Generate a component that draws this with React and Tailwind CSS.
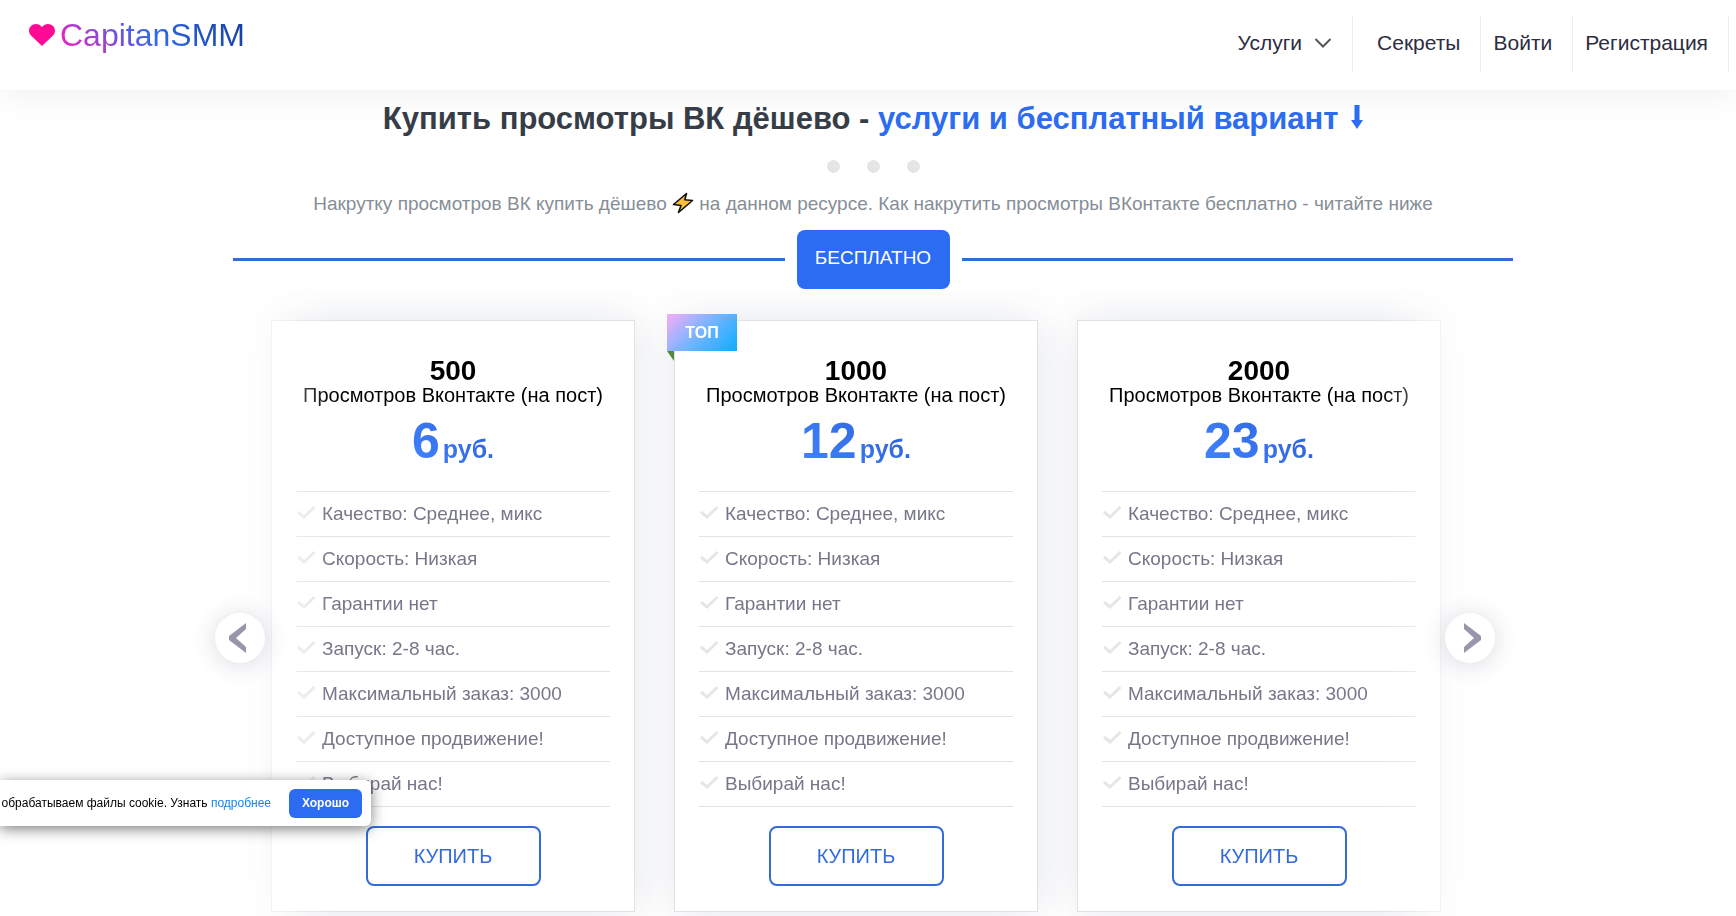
import clsx from 'clsx'

const navLinks = [
  { label: 'Секреты', href: '#secrets', className: 'pl-6' },
  { label: 'Войти', href: '#login', className: 'pl-3' },
  { label: 'Регистрация', href: '#signup', className: 'pl-3' },
]

const features = [
  'Качество: Среднее, микс',
  'Скорость: Низкая',
  'Гарантии нет',
  'Запуск: 2-8 час.',
  'Максимальный заказ: 3000',
  'Доступное продвижение!',
  'Выбирай нас!',
]

const plans = [
  { amount: '500', price: '6' },
  { amount: '1000', price: '12', top: true },
  { amount: '2000', price: '23' },
]

function Header() {
  return (
    <header className="relative z-10 flex h-[90px] items-start justify-between bg-white pt-4 pr-[7px] pl-7 shadow-[0_0_40px_rgba(0,0,0,0.08)]">
      <a href="#home" className="flex items-center gap-1 text-[32px] leading-[38px]">
        <svg viewBox="0 0 26 22" className="h-[22px] w-7" fill="#ff0a95" aria-hidden="true">
          <path d="M13 22 2 11.600C-.6 9 -.6 4.700 1.800 2.200 4.600-.7 9.500-.7 12.200 2.200L13 3l.8-.8C16.500-.7 21.400-.7 24.200 2.200 26.600 4.700 26.600 9 24 11.600Z" />
        </svg>
        <span className="bg-linear-[45deg,#ff1cc0_0%,#2f6be8_50%,#123a96_100%] bg-clip-text text-transparent">
          CapitanSMM
        </span>
      </a>

      <nav className="flex h-14 text-[21px] text-[#2d2d3f]">
        <button type="button" className="flex items-center gap-3 border-r border-[#ededf0] pr-5 pb-0.5">
          Услуги
          <svg viewBox="0 0 18 12" className="h-3 w-[18px]" fill="none" stroke="#55555c" strokeWidth="2" aria-hidden="true">
            <path d="M1.500 2 9 9.500 16.500 2" />
          </svg>
        </button>
        {navLinks.map((link) => (
          <a
            key={link.href}
            href={link.href}
            className={clsx('flex items-center border-r border-[#ededf0] pr-5 pb-0.5', link.className)}
          >
            {link.label}
          </a>
        ))}
      </nav>
    </header>
  )
}

function PlanCard({ plan }) {
  return (
    <article className="relative border border-[#dfe1e6] bg-white px-6 pt-9 pb-[25px] text-center shadow-[0_0_40px_rgba(50,60,100,0.13)]">
      {plan.top ? (
        <div className="absolute -top-[7px] -left-2">
          <span className="flex h-[37px] w-[70px] items-center justify-center bg-linear-[135deg,#f7aef8_0%,#72b4ff_50%,#0aaeff_100%] font-bold text-white">
            ТОП
          </span>
          <svg viewBox="0 0 7 10" className="h-2.5 w-[7px]" fill="#4f8a35" aria-hidden="true">
            <path d="M0 0H7V10Z" />
          </svg>
        </div>
      ) : null}

      <h2 className="text-black">
        <span className="block text-[28px] leading-[27px] font-bold">{plan.amount}</span>
        <span className="block text-xl leading-[22px] whitespace-nowrap">Просмотров Вконтакте (на пост)</span>
      </h2>
      <p className="mt-[5px] text-[50px] leading-[60px] font-bold">
        <span className="bg-linear-[45deg,#4285ff,#2a5bd7] bg-clip-text text-transparent">
          {plan.price}
          <span className="ml-[3px] text-[25px] leading-none">руб.</span>
        </span>
      </p>

      <ul className="mt-5 border-t border-[#e2e2e5] text-left text-[19px] text-[#77778a]">
        {features.map((feature) => (
          <li key={feature} className="flex h-[45px] items-center gap-1.5 border-b border-[#e2e2e5]">
            <svg viewBox="0 0 20 14" className="mb-1 h-3.5 w-5" fill="none" stroke="#e6e6e6" strokeWidth="3" aria-hidden="true">
              <path d="M2 7 8 12 18.500 2" />
            </svg>
            {feature}
          </li>
        ))}
      </ul>

      <button
        type="button"
        className="mt-[19px] h-[60px] w-[175px] rounded-lg border-2 border-[#336bdb] text-xl text-[#336bdb]"
      >
        КУПИТЬ
      </button>
    </article>
  )
}

function ArrowButton({ label, className, points }) {
  return (
    <button
      type="button"
      aria-label={label}
      className={clsx(
        'absolute top-[324px] flex size-[50px] items-center justify-center rounded-full bg-white shadow-[0_2px_24px_rgba(50,50,93,0.18)]',
        className,
      )}
    >
      <svg viewBox="0 0 17 30" className="h-[30px] w-[17px]" fill="#9896aa" aria-hidden="true">
        <polygon points={points} />
      </svg>
    </button>
  )
}

function CookieBar() {
  return (
    <div className="fixed top-[780px] left-0 z-20 flex h-[46px] w-[371px] items-center justify-end rounded-r-md bg-white pr-[9px] text-xs whitespace-nowrap text-black shadow-[0_3px_14px_rgba(0,0,0,0.5)] [clip-path:inset(-30px_-30px_-30px_0)]">
      <p>
        обрабатываем файлы cookie. Узнать{' '}
        <a href="#cookie" className="text-[#1583f0]">
          подробнее
        </a>
      </p>
      <button type="button" className="ml-[18px] h-[29px] w-[73px] shrink-0 rounded-md bg-[#2b6cf3] font-bold text-white">
        Хорошо
      </button>
    </div>
  )
}

export default function App() {
  return (
    <div className="overflow-hidden bg-white font-['Liberation_Sans',Arial,sans-serif]">
      <Header />

      <main className="pt-2.5 pl-2.5 text-center">
        <h1 className="relative z-10 text-[31px] leading-[38px] font-bold text-[#363d47]">
          Купить просмотры ВК дёшево -{' '}
          <span className="text-[#2b6cf0]">
            услуги и бесплатный вариант{' '}
            <svg viewBox="0 0 12 24" className="ml-1 inline h-6 w-3 align-baseline" fill="currentColor" aria-hidden="true">
              <path d="M3.500 0h5v15H12L6 24 0 15h3.500Z" />
            </svg>
          </span>
        </h1>

        <div className="mt-[22px] flex justify-center gap-[27px]">
          <span className="size-[13px] rounded-full bg-[#e5e5e6]" />
          <span className="size-[13px] rounded-full bg-[#e5e5e6]" />
          <span className="size-[13px] rounded-full bg-[#e5e5e6]" />
        </div>

        <p className="mt-[17px] text-[19px] leading-[27px] text-[#868e96]">
          Накрутку просмотров ВК купить дёшево{' '}
          <svg viewBox="0 0 22 22" className="inline h-[22px] w-[22px] align-text-bottom" aria-hidden="true">
            <path
              d="M14.500 1.500 1.500 12.500 9 13.500 6.500 20.500 20.500 8.500 12.800 7.800Z"
              fill="#f9bf3b"
              stroke="#111"
              strokeWidth="1.6"
              strokeLinejoin="round"
            />
          </svg>{' '}
          на данном ресурсе. Как накрутить просмотры ВКонтакте бесплатно - читайте ниже
        </p>

        <div className="mx-auto mt-[13px] flex max-w-[1280px] items-center gap-3">
          <span className="h-[3px] flex-1 bg-[#356cdb]" />
          <button type="button" className="h-[59px] w-[153px] rounded-lg bg-[#2b6cf3] pb-0.5 text-[19px] text-white">
            БЕСПЛАТНО
          </button>
          <span className="h-[3px] flex-1 bg-[#356cdb]" />
        </div>

        <section className="pr-[34px]">
          <div className="relative mx-auto max-w-[1250px]">
            <div className="grid grid-cols-3 gap-x-[39px] overflow-hidden mask-[linear-gradient(to_right,transparent,black_100px,black_calc(100%-100px),transparent)] px-10 pt-[31px] pb-1">
              {plans.map((plan) => (
                <PlanCard key={plan.amount} plan={plan} />
              ))}
            </div>
            <ArrowButton label="Назад" className="-left-4 pr-1.5" points="17,0 17,6 7,15 17,24 17,30 0,17 0,13" />
            <ArrowButton label="Вперёд" className="-right-3.5 pl-1" points="0,0 0,6 10,15 0,24 0,30 17,17 17,13" />
          </div>
        </section>
      </main>

      <CookieBar />
    </div>
  )
}
